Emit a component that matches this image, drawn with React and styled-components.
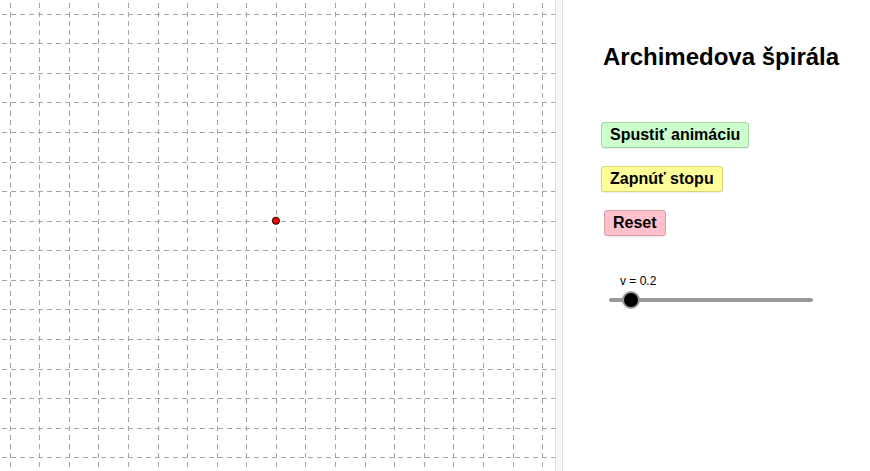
import React from 'react';
import styled, { createGlobalStyle } from 'styled-components';

const GlobalStyle = createGlobalStyle`
  html, body {
    margin: 0;
    padding: 0;
    background: #ffffff;
    font-family: "Liberation Sans", Arial, sans-serif;
  }
`;

// Layout
const Page = styled.div`
  display: flex;
  width: 870px;
  height: 471px;
  overflow: hidden;
`;

const Graphics = styled.div`
  width: 555px;
  height: 100%;
  flex-shrink: 0;
`;

const Divider = styled.div`
  width: 6px;
  height: 100%;
  background: #f6f6f6;
  border-left: 1px solid #dcdcdc;
  border-right: 1px solid #dcdcdc;
  flex-shrink: 0;
`;

const Panel = styled.div`
  flex: 1;
  display: flex;
  flex-direction: column;
  align-items: flex-start;
  padding: 42px 0 0 38px;
`;

const Title = styled.h1`
  margin: 0 0 50px 2px;
  font-size: 24px;
  font-weight: bold;
  color: #000;
  line-height: 30px;
`;

const Button = styled.button`
  height: 26px;
  margin: 0 0 18px ${p => p.$offset || 0}px;
  padding: 0 8px;
  font-family: "Liberation Sans", Arial, sans-serif;
  font-size: 16px;
  font-weight: bold;
  color: #000;
  background: ${p => p.$bg};
  border: 1px solid ${p => p.$border};
  border-radius: 3px;
  box-shadow: 0 1px 1px rgba(0, 0, 0, 0.08);
  cursor: pointer;
`;

const Slider = styled.div`
  margin-top: 20px;
  display: flex;
  flex-direction: column;
  align-items: flex-start;
`;

const SliderLabel = styled.div`
  font-size: 12px;
  color: #000;
  margin-left: 19px;
  line-height: 14px;
`;

const Track = styled.div`
  position: relative;
  margin: 10px 0 0 8px;
  width: 204px;
  height: 4px;
  border-radius: 2px;
  background: #999999;
`;

const Knob = styled.div`
  position: absolute;
  top: 50%;
  width: 14px;
  height: 14px;
  margin: -9px 0 0 -9px;
  border-radius: 50%;
  background: #000;
  border: 2px solid #9a9a9a;
`;

const SPACING = 29.58;
const X0 = 9.7;
const Y0 = 13.7;

const GridView = () => {
  const xs = [];
  for (let x = X0; x < 555; x += SPACING) xs.push(x);
  const ys = [];
  for (let y = Y0; y < 471; y += SPACING) ys.push(y);
  return (
    <svg width="555" height="471" viewBox="0 0 555 471" style={{ display: 'block' }}>
      <g stroke="#a3a3a3" strokeWidth="1" strokeDasharray="5 4" shapeRendering="crispEdges">
        {xs.map(x => (
          <line key={'v' + x} x1={Math.round(x) + 0.5} y1="0" x2={Math.round(x) + 0.5} y2="471" strokeDashoffset="-3" />
        ))}
        {ys.map(y => (
          <line key={'h' + y} x1="0" y1={Math.round(y) + 0.5} x2="555" y2={Math.round(y) + 0.5} strokeDashoffset="-2" />
        ))}
      </g>
      <circle cx={X0 + 9 * SPACING} cy={Y0 + 7 * SPACING} r="3.6" fill="#ff0000" stroke="#000" strokeWidth="0.9" />
    </svg>
  );
};

const App = () => {
  const v = 0.2;
  return (
    <Page>
      <GlobalStyle />
      <Graphics>
        <GridView />
      </Graphics>
      <Divider />
      <Panel>
        <Title>Archimedova špirála</Title>
        <Button $bg="#ccffcc" $border="#a6d6a6">Spustiť animáciu</Button>
        <Button $bg="#ffff99" $border="#d6d67a">Zapnúť stopu</Button>
        <Button $bg="#ffc0cb" $border="#d9a0aa" $offset={3}>Reset</Button>
        <Slider>
          <SliderLabel>v = {v}</SliderLabel>
          <Track>
            <Knob style={{ left: `${v * 110}px` }} />
          </Track>
        </Slider>
      </Panel>
    </Page>
  );
};

export default App;
